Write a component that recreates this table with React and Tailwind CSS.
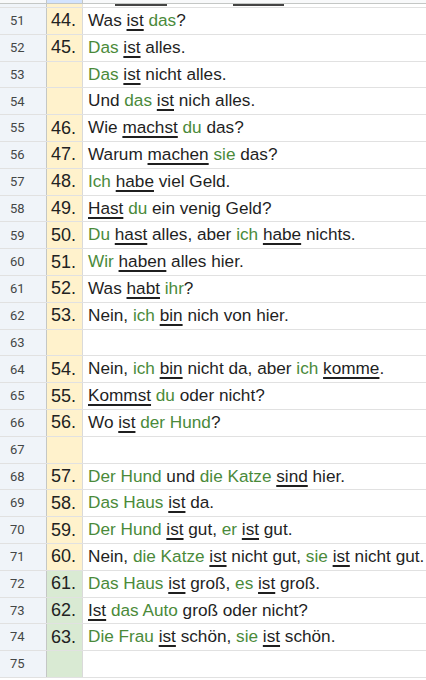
import React from "react";

const G = "g", U = "u";
const rows = [
  [51, "44.", [["Was "], ["ist", U], [" "], ["das", G], ["?"]]],
  [52, "45.", [["Das", G], [" "], ["ist", U], [" alles."]]],
  [53, "", [["Das", G], [" "], ["ist", U], [" nicht alles."]]],
  [54, "", [["Und "], ["das", G], [" "], ["ist", U], [" nich alles."]]],
  [55, "46.", [["Wie "], ["machst", U], [" "], ["du", G], [" das?"]]],
  [56, "47.", [["Warum "], ["machen", U], [" "], ["sie", G], [" das?"]]],
  [57, "48.", [["Ich", G], [" "], ["habe", U], [" viel Geld."]]],
  [58, "49.", [["Hast", U], [" "], ["du", G], [" ein venig Geld?"]]],
  [59, "50.", [["Du", G], [" "], ["hast", U], [" alles, aber "], ["ich", G], [" "], ["habe", U], [" nichts."]]],
  [60, "51.", [["Wir", G], [" "], ["haben", U], [" alles hier."]]],
  [61, "52.", [["Was "], ["habt", U], [" "], ["ihr", G], ["?"]]],
  [62, "53.", [["Nein, "], ["ich", G], [" "], ["bin", U], [" nich von hier."]]],
  [63, "", []],
  [64, "54.", [["Nein, "], ["ich", G], [" "], ["bin", U], [" nicht da, aber "], ["ich", G], [" "], ["komme", U], ["."]]],
  [65, "55.", [["Kommst", U], [" "], ["du", G], [" oder nicht?"]]],
  [66, "56.", [["Wo "], ["ist", U], [" "], ["der Hund", G], ["?"]]],
  [67, "", []],
  [68, "57.", [["Der Hund", G], [" und "], ["die Katze", G], [" "], ["sind", U], [" hier."]]],
  [69, "58.", [["Das Haus", G], [" "], ["ist", U], [" da."]]],
  [70, "59.", [["Der Hund", G], [" "], ["ist", U], [" gut, "], ["er", G], [" "], ["ist", U], [" gut."]]],
  [71, "60.", [["Nein, "], ["die Katze", G], [" "], ["ist", U], [" nicht gut, "], ["sie", G], [" "], ["ist", U], [" nicht gut."]]],
  [72, "61.", [["Das Haus", G], [" "], ["ist", U], [" groß, "], ["es", G], [" "], ["ist", U], [" groß."]]],
  [73, "62.", [["Ist", U], [" "], ["das Auto", G], [" groß oder nicht?"]]],
  [74, "63.", [["Die Frau", G], [" "], ["ist", U], [" schön, "], ["sie", G], [" "], ["ist", U], [" schön."]]],
  [75, "", []],
];

function Seg({ t, k }) {
  if (k === G) return <span className="text-[#4a8a3a]">{t}</span>;
  if (k === U) return <span className="underline decoration-[1.5px] underline-offset-[3px]">{t}</span>;
  return <span>{t}</span>;
}

export default function App() {
  return (
    <div className="w-[426px] h-[680px] overflow-hidden bg-white" style={{ fontFamily: '"Liberation Sans", Arial, sans-serif' }}>
      <div className="flex h-[4px] border-b border-[#c4c7c5]">
        <div className="w-[47px] bg-[#f8f9fa] border-r border-[#c4c7c5]" />
        <div className="w-[36px] bg-[#d3e3fd] border-r border-[#c4c7c5]" />
        <div className="flex-1 bg-[#f8f9fa]" />
      </div>
      <div className="flex h-[4px] border-b border-[#e1e1e1]">
        <div className="w-[47px] bg-[#f0f4f9] border-r border-[#c4c7c5]" />
        <div className="w-[36px] bg-[#fff2cc] border-r border-[#e1e1e1]" />
        <div className="flex-1 flex items-start">
          <div className="ml-[32px] w-[52px] h-[2px] bg-[#444]" />
          <div className="ml-[66px] w-[51px] h-[2px] bg-[#444]" />
        </div>
      </div>
      {rows.map(([n, num, segs]) => {
        const green = n >= 72;
        return (
          <div key={n} className="flex h-[26.8px] border-b border-[#e1e1e1]">
            <div className="w-[47px] shrink-0 bg-[#f0f4f9] border-r border-[#c4c7c5] flex items-center pl-[10px] text-[13px] text-[#444746]" style={{ fontFamily: 'Roboto, "Liberation Sans", sans-serif' }}>
              {n}
            </div>
            <div className={`w-[36px] shrink-0 border-r border-[#dadada] flex items-center pl-[4px] text-[18px] text-[#222] ${green ? "bg-[#d9ead3]" : "bg-[#fff2cc]"}`}>
              {num}
            </div>
            <div className="flex-1 flex items-center pl-[5px] text-[17.2px] text-[#1f1f1f] whitespace-pre overflow-hidden">
              {segs.map(([t, k], i) => (
                <Seg key={i} t={t} k={k} />
              ))}
            </div>
          </div>
        );
      })}
    </div>
  );
}
